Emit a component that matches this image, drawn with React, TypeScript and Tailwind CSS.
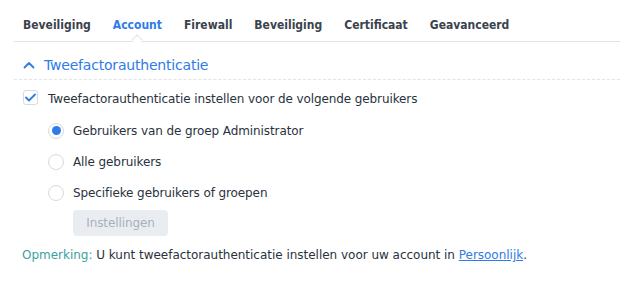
import React from "react";

const tabs = ["Beveiliging", "Account", "Firewall", "Beveiliging", "Certificaat", "Geavanceerd"];

function Radio({ checked, label }: { checked?: boolean; label: string }) {
  return (
    <div className="flex items-center h-[31px] pl-[48px]">
      <span className="w-[16px] h-[16px] rounded-full border border-[#d5dbe3] bg-white flex items-center justify-center">
        {checked && <span className="w-[9px] h-[9px] rounded-full bg-[#2f7be8]" />}
      </span>
      <span className="ml-[9px] text-[12px] tracking-[-0.1px] text-[#29323d]">{label}</span>
    </div>
  );
}

export default function App() {
  return (
    <div className="w-[620px] h-[287px] bg-white font-['DejaVu_Sans',sans-serif] overflow-hidden">
      <div className="relative ml-[14px] h-[42px] border-b border-[#dde4ec] flex items-end pb-[10px] pl-[9px] gap-[22px]">
        {tabs.map((t, i) => (
          <div
            key={i}
            className={`relative font-['DejaVu_Sans_Condensed','DejaVu_Sans',sans-serif] text-[12px] font-bold leading-none ${i === 1 ? "text-[#2f7be8]" : "text-[#3a434d]"}`}
          >
            {t}
            {i === 1 && (
              <span className="absolute left-1/2 -translate-x-1/2 top-[17px] w-[8px] h-[8px] rotate-45 bg-white border-l border-t border-[#dde4ec]" />
            )}
          </div>
        ))}
      </div>
      <div className="ml-[14px] h-[38px] flex items-center border-b border-dashed border-[#dfe4ea] pl-[9px] pt-[9px]">
        <svg width="12" height="8" viewBox="0 0 12 8" className="mr-[9px]">
          <path d="M1.5 6.5 L6 2 L10.5 6.5" fill="none" stroke="#2f7be8" strokeWidth="1.8" strokeLinecap="round" strokeLinejoin="round" />
        </svg>
        <span className="text-[14px] tracking-[-0.2px] text-[#2f7be8]">Tweefactorauthenticatie</span>
      </div>
      <div className="flex items-center h-[35px] pl-[23px]">
        <span className="w-[15px] h-[15px] rounded-[3px] border border-[#d5dbe3] flex items-center justify-center">
          <svg width="11" height="9" viewBox="0 0 11 9">
            <path d="M1 4.5 L4 7.5 L10 1.5" fill="none" stroke="#2f7be8" strokeWidth="1.8" strokeLinecap="round" strokeLinejoin="round" />
          </svg>
        </span>
        <span className="ml-[10px] text-[12px] tracking-[-0.1px] text-[#29323d] translate-y-[1px]">
          Tweefactorauthenticatie instellen voor de volgende gebruikers
        </span>
      </div>
      <Radio checked label="Gebruikers van de groep Administrator" />
      <Radio label="Alle gebruikers" />
      <Radio label="Specifieke gebruikers of groepen" />
      <div className="pl-[73px] pt-[2px]">
        <div className="w-[95px] h-[26px] rounded-[4px] bg-[#e9edf2] text-[#a9b0b8] text-[12px] tracking-[-0.1px] flex items-center justify-center">
          Instellingen
        </div>
      </div>
      <div className="pl-[22px] pt-[10px] text-[12px] tracking-[-0.02px] text-[#29323d]">
        <span className="text-[#3aa29e]">Opmerking:</span> U kunt tweefactorauthenticatie instellen voor uw account in{" "}
        <span className="text-[#2f7be8] underline">Persoonlijk</span>.
      </div>
    </div>
  );
}
